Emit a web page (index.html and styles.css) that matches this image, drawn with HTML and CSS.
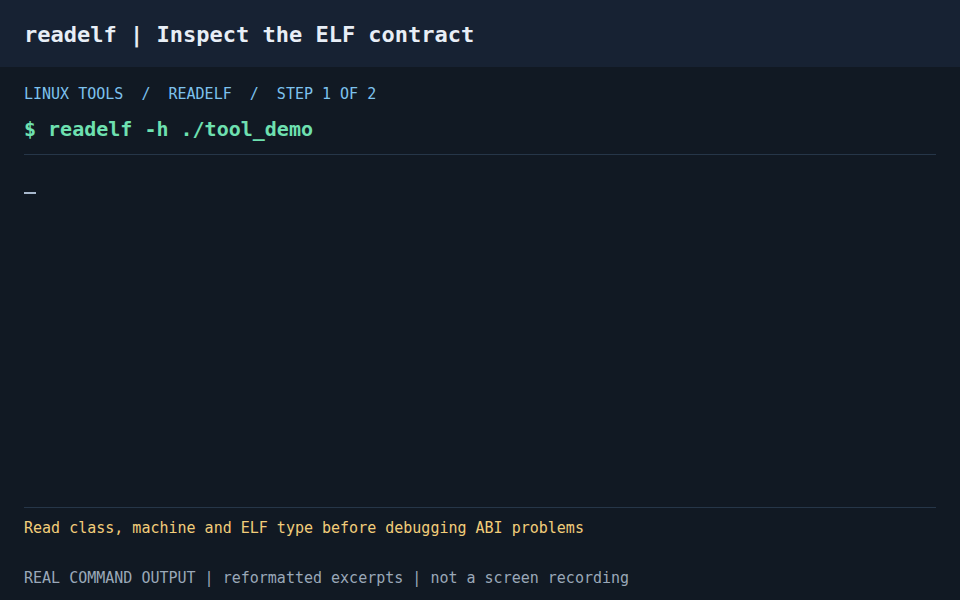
FILE: index.html
```html
<!DOCTYPE html>
<html lang="en">
<head>
<meta charset="utf-8">
<title>readelf | Inspect the ELF contract</title>
<link rel="stylesheet" href="styles.css">
</head>
<body>
<div class="page">
  <header class="topbar">
    <h1 class="title">readelf | Inspect the ELF contract</h1>
  </header>
  <main class="content">
    <div class="crumbs">LINUX TOOLS  /  READELF  /  STEP 1 OF 2</div>
    <div class="command">$ readelf -h ./tool_demo</div>
    <section class="output">
      <span class="cursor"></span>
    </section>
    <footer class="foot">
      <p class="hint">Read class, machine and ELF type before debugging ABI problems</p>
      <p class="note">REAL COMMAND OUTPUT | reformatted excerpts | not a screen recording</p>
    </footer>
  </main>
</div>
</body>
</html>
```
FILE: styles.css
```css
* { box-sizing: border-box; }
html, body {
  margin: 0;
  padding: 0;
  background: #111923;
}
body {
  font-family: "DejaVu Sans Mono", "Liberation Mono", monospace;
  width: 960px;
  height: 600px;
  overflow: hidden;
}
.page {
  display: flex;
  flex-direction: column;
  height: 600px;
}
.topbar {
  height: 67px;
  flex: none;
  background: #172233;
  display: flex;
  align-items: center;
  padding: 2px 24px 0;
}
.title {
  margin: 0;
  font-size: 22px;
  font-weight: bold;
  color: #e8eef6;
  line-height: 26px;
}
.content {
  flex: 1;
  display: flex;
  flex-direction: column;
  padding: 17px 24px 0;
}
.crumbs {
  font-size: 15px;
  line-height: 20px;
  color: #7dc2ee;
  white-space: pre;
}
.command {
  margin-top: 12px;
  font-size: 20px;
  font-weight: bold;
  line-height: 26px;
  color: #6ee0b0;
  padding-bottom: 12px;
  border-bottom: 1px solid #263648;
}
.output {
  flex: 1;
  padding-top: 37px;
}
.cursor {
  display: block;
  width: 12px;
  height: 2px;
  background: #a7b8cc;
}
.foot {
  border-top: 1px solid #263648;
  padding-top: 10px;
  padding-bottom: 12px;
}
.hint {
  margin: 0;
  font-size: 15px;
  line-height: 20px;
  color: #f2cd7a;
}
.note {
  margin: 30px 0 0;
  font-size: 15px;
  line-height: 20px;
  color: #9aa8b8;
}
```
